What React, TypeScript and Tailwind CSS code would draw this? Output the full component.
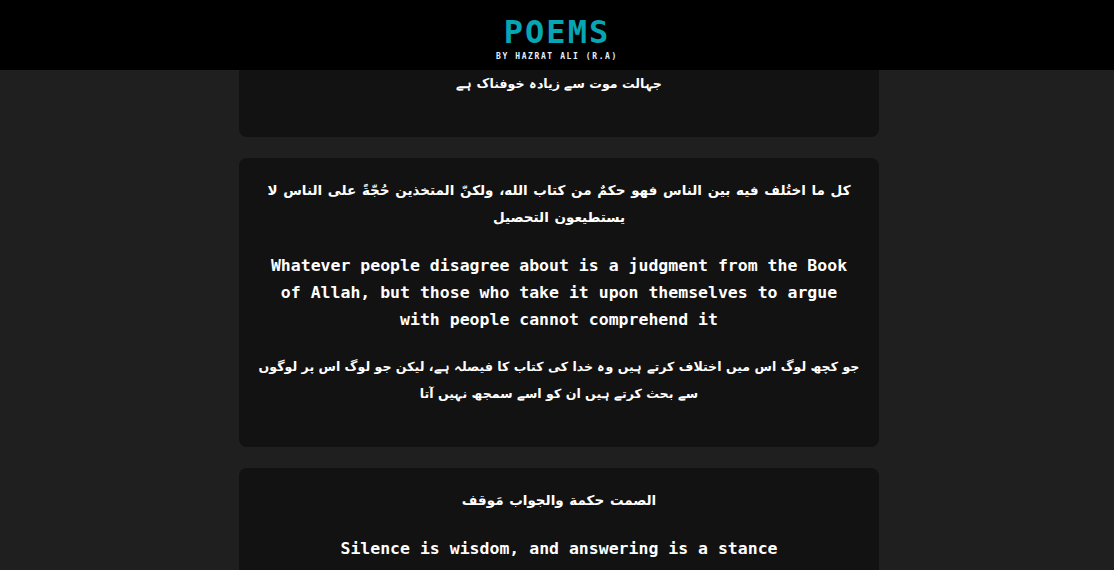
const poems = [
  {
    arabic:
      "كل ما اختُلف فيه بين الناس فهو حكمٌ من كتاب الله، ولكنّ المتخذين حُجّةً على الناس لا يستطيعون التحصيل",
    english:
      "Whatever people disagree about is a judgment from the Book of Allah, but those who take it upon themselves to argue with people cannot comprehend it",
    urdu: "جو کچھ لوگ اس میں اختلاف کرتے ہیں وہ خدا کی کتاب کا فیصلہ ہے، لیکن جو لوگ اس پر لوگوں سے بحث کرتے ہیں ان کو اسے سمجھ نہیں آتا",
  },
  {
    arabic: "الصمت حكمة والجواب مَوقف",
    english: "Silence is wisdom, and answering is a stance",
    urdu: "خاموشی حکمت ہے اور جواب دینا ایک موقف ہے",
  },
];

const mono = "font-['DejaVu_Sans_Mono','Liberation_Mono',monospace]";
const arabic = "font-['DejaVu_Sans',sans-serif] text-[13.5px] [word-spacing:1px]";
const urdu = "font-['DejaVu_Sans',sans-serif] text-[12.6px]";

const App = () => {
  return (
    <div className={`h-[570px] overflow-hidden bg-[#1f1f1f] ${mono}`}>
      <header className="h-[70px] bg-black flex flex-col items-center pt-[13px]">
        <h1 className="text-[32px] leading-[38px] font-bold tracking-[2px] text-[#07a6b4]">
          POEMS
        </h1>
        <p className="text-[8px] leading-[10px] font-bold tracking-[1.6px] text-[#e2f1ff] mt-[1px]">
          BY HAZRAT ALI (R.A)
        </p>
      </header>

      <main className="flex flex-col items-center gap-[21px] pl-[4px] font-bold text-white text-[16.5px] leading-[27px] text-center">
        {/* first card is scrolled mostly under the header */}
        <div className="w-[640px] bg-[#121212] rounded-b-lg px-5 pb-10">
          <p dir="rtl" className={urdu}>
            جہالت موت سے زیادہ خوفناک ہے
          </p>
        </div>

        {poems.map((poem, i) => (
          <div key={i} className="w-[640px] bg-[#121212] rounded-lg p-5">
            <p dir="rtl" className={`mb-5 -mx-3 -mt-[1px] pb-[1px] ${arabic}`}>
              {poem.arabic}
            </p>
            <p className="mb-5">{poem.english}</p>
            <p dir="rtl" className={`mb-5 -mx-3 ${urdu}`}>
              {poem.urdu}
            </p>
          </div>
        ))}
      </main>
    </div>
  );
};

export default App;
